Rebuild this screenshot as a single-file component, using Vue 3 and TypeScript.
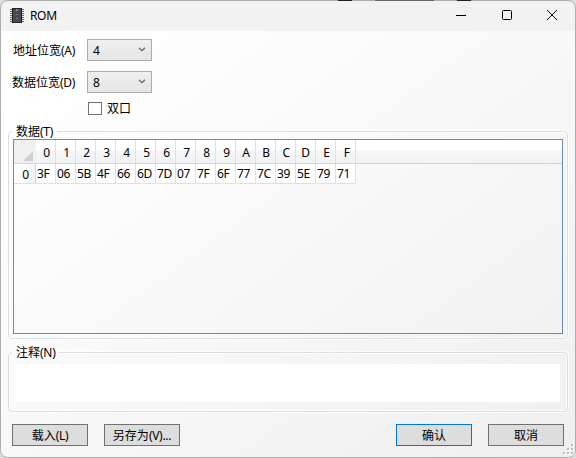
<script setup lang="ts">
import { ref } from 'vue'

interface Field { label: string; key: string; value: string }

const fields = ref<Field[]>([
  { label: '地址位宽', key: '(A)', value: '4' },
  { label: '数据位宽', key: '(D)', value: '8' },
])
const columns: string[] = [...'0123456789ABCDEF']
const data: string[] = ['3F', '06', '5B', '4F', '66', '6D', '7D', '07', '7F', '6F', '77', '7C', '39', '5E', '79', '71']
const pins: number[] = [1, 3, 5, 7, 9, 11, 13]
const dualPort = ref(false)
const note = ref('')
</script>

<template>
  <div class="desktop">
    <i class="behind b1"></i><i class="behind b2"></i><i class="behind b3"></i>
    <main class="window">
      <header class="titlebar">
        <svg class="app-icon" width="14" height="16" viewBox="0 0 14 16" shape-rendering="crispEdges">
          <g fill="#66696c">
            <rect v-for="p in pins" :key="p" x="0" :y="p" width="14" height="1" />
          </g>
          <rect x="2" y="0" width="10" height="15" fill="#202224" />
          <rect x="3" y="1" width="8" height="13" fill="#484a4c" />
          <rect x="6" y="1" width="2" height="2" fill="#85878a" />
          <rect x="6" y="6" width="2" height="1" fill="#77797b" />
          <rect x="6" y="10" width="2" height="1" fill="#77797b" />
        </svg>
        <h1>ROM</h1>
        <div class="controls">
          <svg width="10" height="10" viewBox="0 0 10 10"><path d="M0 5.5H10" stroke="#000" /></svg>
          <svg width="10" height="10" viewBox="0 0 10 10"><rect x=".5" y=".5" width="9" height="9" rx="1" fill="none" stroke="#000" /></svg>
          <svg width="10" height="10" viewBox="0 0 10 10"><path d="M0 0L10 10M10 0L0 10" stroke="#111" /></svg>
        </div>
      </header>

      <section class="body">
        <div v-for="f in fields" :key="f.key" class="field">
          <label>{{ f.label }}<span class="en">{{ f.key }}</span></label>
          <button class="combo" type="button">
            <span class="value">{{ f.value }}</span>
            <svg width="8" height="5" viewBox="0 0 8 5"><path d="M1 .8L4 3.6L7 .8" fill="none" stroke="#606060" stroke-width="1.2" /></svg>
          </button>
        </div>
        <div class="check" @click="dualPort = !dualPort">
          <span class="box"></span><span>双口</span>
        </div>

        <fieldset class="group data-group">
          <legend>数据<span class="en">(T)</span></legend>
          <div class="grid">
            <div class="row head">
              <span class="corner"><svg width="10" height="10" viewBox="0 0 10 10"><path d="M10 0V10H0Z" fill="#cfcfcf" /></svg></span>
              <span v-for="c in columns" :key="c" class="cell">{{ c }}</span>
            </div>
            <div class="row">
              <span class="row-head">0</span>
              <span v-for="(d, i) in data" :key="i" class="cell">{{ d }}</span>
            </div>
          </div>
        </fieldset>

        <fieldset class="group note-group">
          <legend>注释<span class="en">(N)</span></legend>
          <textarea v-model="note"></textarea>
        </fieldset>

        <footer class="actions">
          <button type="button" class="btn">载入<span class="en">(L)</span></button>
          <button type="button" class="btn">另存为<span class="en">(V)...</span></button>
          <button type="button" class="btn primary">确认</button>
          <button type="button" class="btn">取消</button>
        </footer>
      </section>
      <svg class="grip" width="12" height="12" viewBox="0 0 12 12" shape-rendering="crispEdges">
        <g fill="#fff"><path d="M10 1h2v2h-2zM10 5h2v2h-2zM6 5h2v2h-2zM10 9h2v2h-2zM6 9h2v2h-2zM2 9h2v2h-2z" /></g>
        <g fill="#b8c3d2"><path d="M9 0h2v2h-2zM9 4h2v2h-2zM5 4h2v2h-2zM9 8h2v2h-2zM5 8h2v2h-2zM1 8h2v2h-2z" /></g>
      </svg>
    </main>
  </div>
</template>

<style>
body { margin: 0; overflow: hidden; background: #d9d9d9; }
</style>

<style scoped>
* { box-sizing: border-box; }
.desktop {
  position: relative;
  width: 576px;
  height: 458px;
  background: #dedede;
  font: 12px/16px "Noto Sans", "Noto Sans CJK SC", sans-serif;
  color: #000;
}
.behind { position: absolute; top: 0; height: 1px; z-index: 2; background: #222; }
.b1 { left: 338px; width: 14px; }
.b2 { left: 375px; width: 59px; background: #666; }
.b3 { left: 457px; width: 14px; }
.window {
  position: relative;
  display: flex;
  flex-direction: column;
  width: 576px;
  height: 458px;
  border: 1px solid #adadad;
  border-radius: 8px;
  overflow: hidden;
}
.titlebar {
  display: flex;
  align-items: center;
  flex: 0 0 30px;
  padding-left: 9px;
  background: #f2f2f2;
}
h1 { margin: 0 0 0 6px; font-size: 12px; font-weight: 400; letter-spacing: -.35px; }
.controls { display: flex; gap: 35.5px; margin: -2px 0 0 auto; padding-right: 18px; }
.controls svg { display: block; }
.body {
  flex: 1;
  display: flex;
  flex-direction: column;
  padding: 8px 7px 10px;
  background: linear-gradient(to bottom right, #fff 0%, #fefefe 15%, #efefef 100%);
}
.en { letter-spacing: -.3px; }
.field { display: flex; align-items: center; height: 22px; margin-bottom: 10px; }
.field label { width: 67px; text-align: right; white-space: nowrap; padding-top: 1px; }
.combo {
  display: flex;
  align-items: center;
  justify-content: space-between;
  width: 65px;
  height: 22px;
  margin-left: 12px;
  padding: 0 5px;
  border: 1px solid #acacac;
  background: linear-gradient(#f0f0f0, #e5e5e5);
  font: inherit;
  color: #000;
}
.value { padding-top: 1px; }
.combo svg { margin-top: -2px; }
.check { display: flex; align-items: center; gap: 5px; height: 15px; margin: -2px 0 0 80px; }
.box { width: 14px; height: 13px; border: 1px solid #707070; background: #fff; }
.group {
  min-width: 0;
  margin: 0;
  border: 1px solid #d5dfe5;
  border-radius: 4px;
  box-shadow: inset 0 0 0 1px rgba(255, 255, 255, .8), 0 0 0 1px rgba(255, 255, 255, .7);
}
.group legend { margin-left: -1px; padding: 1px 4px 0; line-height: 14px; white-space: nowrap; }
.data-group { height: 215px; margin-top: 8px; padding: 0 4px 4px; }
.grid { height: 195px; border: 1px solid #688caf; }
.row { display: flex; height: 20px; }
.row.head {
  height: 24px;
  background: linear-gradient(#fff 0%, #fff 42%, #f6f7f9 45%, #f1f2f4 100%);
  border-bottom: 1px solid #d5d5d5;
}
.cell {
  flex: 0 0 20px;
  border-right: 1px solid #e0e0e0;
  border-bottom: 1px solid #e0e0e0;
  background: #fff;
  line-height: 19px;
  padding-left: 1px;
  letter-spacing: -.3px;
  white-space: nowrap;
}
.head .cell { background: none; border-bottom: 0; line-height: 25px; padding: 0 5px 0 0; text-align: right; letter-spacing: 0; }
.corner { flex: 0 0 22px; display: flex; align-items: flex-end; justify-content: flex-end; padding: 0 3px 2px 0; background: #f0f0f0; }
.row-head {
  flex: 0 0 22px;
  padding-right: 6px;
  border-right: 1px solid #d5d5d5;
  border-bottom: 1px solid #e0e0e0;
  background: linear-gradient(to right, #fff 45%, #f1f2f4);
  line-height: 21px;
  text-align: right;
}
.note-group { height: 67px; margin-top: 6px; padding: 4px 7px 8px; }
.note-group legend { margin-left: -4px; }
textarea { display: block; width: 100%; height: 38px; border: 0; padding: 2px; resize: none; outline: 0; background: #fff; font: inherit; }
.actions { display: flex; gap: 16px; margin: 12px 4px 0; }
.btn {
  width: 76px;
  height: 22px;
  padding: 1px 0 0;
  border: 1px solid #707070;
  background: #ddd;
  font: inherit;
  line-height: 19px;
  color: #000;
  white-space: nowrap;
}
.primary { margin-left: auto; border-color: #0078d7; }
.grip { position: absolute; right: 1px; bottom: 1px; }
</style>
